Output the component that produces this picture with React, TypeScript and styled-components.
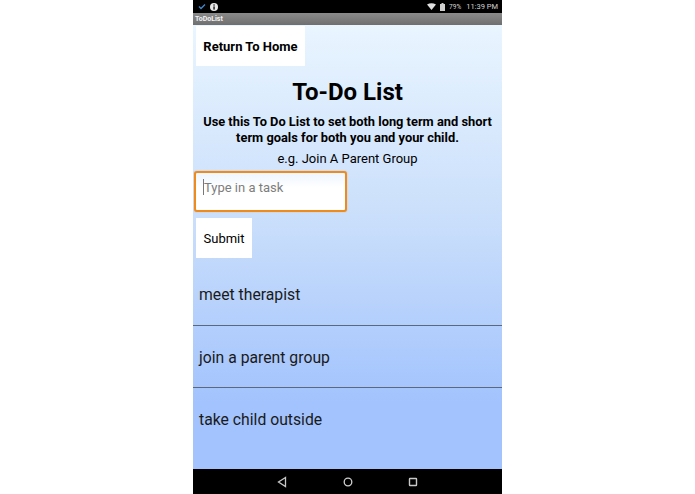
import React from "react";
import styled, { createGlobalStyle } from "styled-components";

const GlobalStyle = createGlobalStyle`
  html, body {
    margin: 0;
    padding: 0;
    background: #fff;
  }
  body {
    font-family: Roboto, "Liberation Sans", sans-serif;
  }
`;

const Page = styled.div`
  width: 695px;
  height: 494px;
  display: flex;
  justify-content: center;
  background: #fff;
  overflow: hidden;
`;

const Device = styled.div`
  width: 309px;
  height: 494px;
  display: flex;
  flex-direction: column;
`;

const StatusBar = styled.div`
  height: 13px;
  background: #000;
  display: flex;
  align-items: center;
  justify-content: space-between;
  padding: 0 4px 0 5px;
  color: #d4d4d4;
  font-size: 7.5px;
`;

const StatusGroup = styled.div`
  display: flex;
  align-items: center;
  gap: 4px;
`;

const Clock = styled.span`
  font-size: 7.5px;
  margin-left: 1px;
`;

const Battery = styled.span`
  font-size: 6.5px;
`;

const TitleBar = styled.div`
  height: 12px;
  background: linear-gradient(#8a8a8a, #6f6f6f);
  color: #f2f2f2;
  font-size: 7px;
  font-weight: 700;
  line-height: 12px;
  padding-left: 2px;
`;

const Content = styled.main`
  flex: 1;
  display: flex;
  flex-direction: column;
  background: linear-gradient(#e9f5ff 0%, #c9defb 45%, #a2c3fd 85%, #a2c3fd 100%);
`;

const WhiteButton = styled.button<{ $bold?: boolean }>`
  align-self: flex-start;
  margin: 0 0 0 3px;
  padding: 0;
  border: none;
  background: #fff;
  color: #000;
  font-family: inherit;
  font-size: 13px;
  font-weight: ${(p) => (p.$bold ? 700 : 400)};
  white-space: nowrap;
`;

const HomeButton = styled(WhiteButton)`
  width: 109px;
  height: 40px;
  margin-top: 1px;
  padding-top: 1px;
`;

const SubmitButton = styled(WhiteButton)`
  width: 56px;
  height: 40px;
  margin-top: 6px;
`;

const Heading = styled.h1`
  margin: 11px 0 0;
  text-align: center;
  font-size: 24px;
  line-height: 30px;
  font-weight: 700;
  color: #000;
`;

const Intro = styled.p`
  margin: 7px 0 0;
  padding: 0 8px;
  text-align: center;
  font-size: 12.85px;
  line-height: 16px;
  font-weight: 700;
  color: #000;
`;

const Example = styled.p`
  margin: 5px 0 0;
  text-align: center;
  font-size: 13px;
  line-height: 16px;
  color: #000;
`;

const TaskField = styled.div`
  box-sizing: border-box;
  width: 153px;
  height: 41px;
  margin: 4px 0 0 1px;
  border: 2px solid #ef8a1d;
  border-radius: 3px;
  box-shadow: 0 0 1px #ef8a1d;
  background: linear-gradient(#eef6ff, #fff 40%);
  display: flex;
  align-items: flex-start;
  padding: 6px 0 0 7px;
  color: #7d7d7d;
  font-size: 13px;
  line-height: 17px;
`;

const Caret = styled.span`
  width: 1px;
  height: 16px;
  background: #777;
  flex: none;
`;

const TaskList = styled.ul`
  list-style: none;
  margin: 5px 0 0;
  padding: 0;
`;

const TaskRow = styled.li`
  box-sizing: border-box;
  height: 62.5px;
  display: flex;
  align-items: center;
  padding: 2px 0 0 6px;
  font-size: 15.75px;
  color: #1a1a1a;
  border-bottom: 1px solid #5c687c;

  &:last-child {
    padding-top: 0;
    border-bottom: none;
  }
`;

const NavBar = styled.nav`
  height: 25px;
  background: #000;
  display: flex;
  align-items: center;
  justify-content: center;
  gap: 53.5px;
`;

const tasks = ["meet therapist", "join a parent group", "take child outside"];

export default function App() {
  return (
    <Page>
      <GlobalStyle />
      <Device>
        <StatusBar>
          <StatusGroup>
            <svg width="8" height="7" viewBox="0 0 8 7">
              <path d="M1 3.5 L3 5.5 L7 1.5" fill="none" stroke="#3f86c9" strokeWidth="1.4" />
            </svg>
            <svg width="8" height="8" viewBox="0 0 8 8">
              <circle cx="4" cy="4" r="4" fill="#e6e6e6" />
              <rect x="3.4" y="3.4" width="1.3" height="3.2" fill="#000" />
              <rect x="3.4" y="1.4" width="1.3" height="1.2" fill="#000" />
            </svg>
          </StatusGroup>
          <StatusGroup>
            <svg width="9" height="7" viewBox="0 0 9 7">
              <path d="M0 1.5 Q4.5 -1 9 1.5 L4.5 7 Z" fill="#e0e0e0" />
            </svg>
            <svg width="5" height="8" viewBox="0 0 5 8">
              <rect x="1.5" y="0" width="2" height="1" fill="#cfcfcf" />
              <rect x="0" y="1" width="5" height="7" fill="#cfcfcf" />
            </svg>
            <Battery>79%</Battery>
            <Clock>11:39 PM</Clock>
          </StatusGroup>
        </StatusBar>
        <TitleBar>ToDoList</TitleBar>
        <Content>
          <HomeButton $bold>Return To Home</HomeButton>
          <Heading>To-Do List</Heading>
          <Intro>Use this To Do List to set both long term and short term goals for both you and your child.</Intro>
          <Example>e.g. Join A Parent Group</Example>
          <TaskField>
            <Caret />
            Type in a task
          </TaskField>
          <SubmitButton>Submit</SubmitButton>
          <TaskList>
            {tasks.map((t) => (
              <TaskRow key={t}>{t}</TaskRow>
            ))}
          </TaskList>
        </Content>
        <NavBar>
          <svg width="12" height="12" viewBox="0 0 12 12">
            <path d="M9.5 1.5 L2.5 6 L9.5 10.5 Z" fill="none" stroke="#c8c8c8" strokeWidth="1.3" />
          </svg>
          <svg width="12" height="12" viewBox="0 0 12 12">
            <circle cx="6" cy="6" r="3.8" fill="none" stroke="#d0d0d0" strokeWidth="1.3" />
          </svg>
          <svg width="12" height="12" viewBox="0 0 12 12">
            <rect x="2.5" y="2.5" width="7" height="7" rx="0.5" fill="none" stroke="#c8c8c8" strokeWidth="1.4" />
          </svg>
        </NavBar>
      </Device>
    </Page>
  );
}
